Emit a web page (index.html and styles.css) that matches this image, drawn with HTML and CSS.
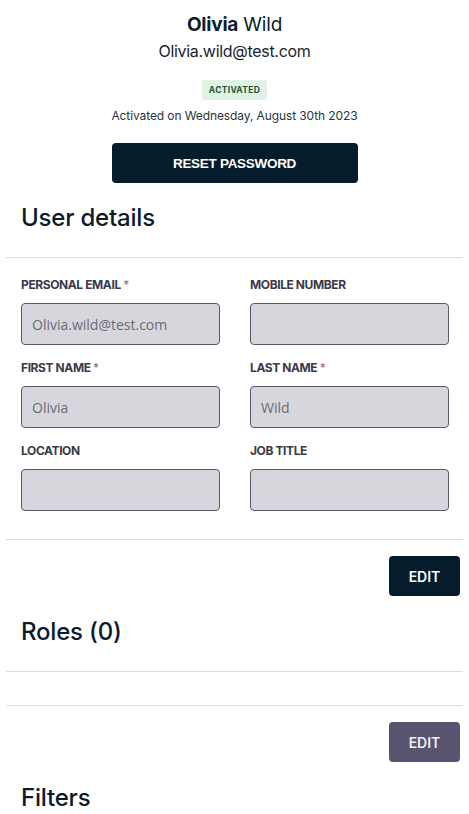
FILE: index.html
```html
<!DOCTYPE html>
<html>
<head>
<meta charset="utf-8">
<link rel="stylesheet" href="styles.css">
</head>
<body>
<div class="page">
  <header class="profile">
    <div class="name"><strong>Olivia</strong> Wild</div>
    <div class="email">Olivia.wild@test.com</div>
    <span class="badge">ACTIVATED</span>
    <div class="activated">Activated on Wednesday, August 30th 2023</div>
    <button class="btn btn-reset">RESET PASSWORD</button>
  </header>

  <h2 class="section-title first">User details</h2>
  <hr class="divider">

  <div class="form-grid">
    <div class="field">
      <label class="label">PERSONAL EMAIL <span class="req">*</span></label>
      <div class="input">Olivia.wild@test.com</div>
    </div>
    <div class="field">
      <label class="label">MOBILE NUMBER</label>
      <div class="input"></div>
    </div>
    <div class="field">
      <label class="label">FIRST NAME <span class="req">*</span></label>
      <div class="input">Olivia</div>
    </div>
    <div class="field">
      <label class="label">LAST NAME <span class="req">*</span></label>
      <div class="input">Wild</div>
    </div>
    <div class="field">
      <label class="label">LOCATION</label>
      <div class="input"></div>
    </div>
    <div class="field">
      <label class="label">JOB TITLE</label>
      <div class="input"></div>
    </div>
  </div>

  <hr class="divider d2">
  <div class="actions"><button class="btn btn-edit">EDIT</button></div>

  <h2 class="section-title roles">Roles (0)</h2>
  <hr class="divider d3">
  <hr class="divider d4">
  <div class="actions"><button class="btn btn-edit muted">EDIT</button></div>

  <h2 class="section-title filters">Filters</h2>
</div>
</body>
</html>
```

FILE: styles.css
```css
* { box-sizing: border-box; }
html, body { margin: 0; padding: 0; background: #fff; }
body {
  font-family: Inter, "Liberation Sans", Arial, sans-serif;
  color: #0b1b2b;
  width: 469px;
  height: 814px;
  overflow: hidden;
}
.page { padding: 0 6px; }

.profile {
  display: flex;
  flex-direction: column;
  align-items: center;
  padding-top: 13px;
}
.name { font-size: 19px; line-height: 24px; font-weight: 400; letter-spacing: -0.2px; }
.name strong { font-weight: 700; }
.email { margin-top: 4px; font-size: 16px; line-height: 20px; color: #1a2430; letter-spacing: -0.3px; }
.badge {
  margin-top: 19px;
  height: 20px;
  line-height: 20px;
  padding: 0 7px;
  border-radius: 3px;
  background: #def3e4;
  color: #245238;
  font-size: 8.5px;
  font-weight: 700;
  letter-spacing: 0.3px;
}
.activated { margin-top: 8px; font-size: 12px; line-height: 16px; color: #2a3440; letter-spacing: -0.1px; }

.btn {
  border: 0;
  border-radius: 4px;
  background: #041c2c;
  color: #fff;
  font-family: "Liberation Sans", Arial, sans-serif;
  font-weight: 700;
  cursor: pointer;
}
.btn-reset {
  margin-top: 19px;
  width: 246px;
  height: 40px;
  font-size: 13.5px;
  letter-spacing: -0.3px;
}

.section-title {
  margin: 0;
  padding-left: 15px;
  font-size: 24px;
  line-height: 30px;
  font-weight: 500;
  color: #0b1b2b;
  letter-spacing: -0.2px;
}
.section-title.first { margin-top: 20px; }

.divider { border: 0; border-top: 1px solid #d8d8de; margin: 0; }
.section-title.first + .divider { margin-top: 24px; }

.form-grid {
  display: grid;
  grid-template-columns: 199px 199px;
  column-gap: 30px;
  row-gap: 16px;
  padding: 20px 15px 0;
}
.field { display: flex; flex-direction: column; }
.label {
  font-size: 12px;
  line-height: 14px;
  font-weight: 700;
  color: #3a3a48;
  letter-spacing: -0.4px;
}
.req { color: #8a7080; font-weight: 400; }
.input {
  margin-top: 11px;
  height: 42px;
  background: #d7d6dc;
  border: 1px solid #5b5967;
  border-radius: 4px;
  padding: 0 10px;
  display: flex;
  align-items: center;
  font-family: "Open Sans", sans-serif;
  font-size: 14px;
  color: #6b6a78;
}

.divider.d2 { margin-top: 28px; }
.actions { display: flex; justify-content: flex-end; padding-right: 3px; margin-top: 16px; }
.btn-edit { width: 71px; height: 40px; font-size: 14px; font-family: Inter, "Liberation Sans", sans-serif; font-weight: 600; }
.btn-edit.muted { background: #56546e; color: #eeeef2; }

.section-title.roles { margin-top: 21px; }
.divider.d3 { margin-top: 24px; border-top-color: #dcdcdc; }
.divider.d4 { margin-top: 33px; border-top-color: #dcdcdc; }
.section-title.filters { margin-top: 21px; }
```
